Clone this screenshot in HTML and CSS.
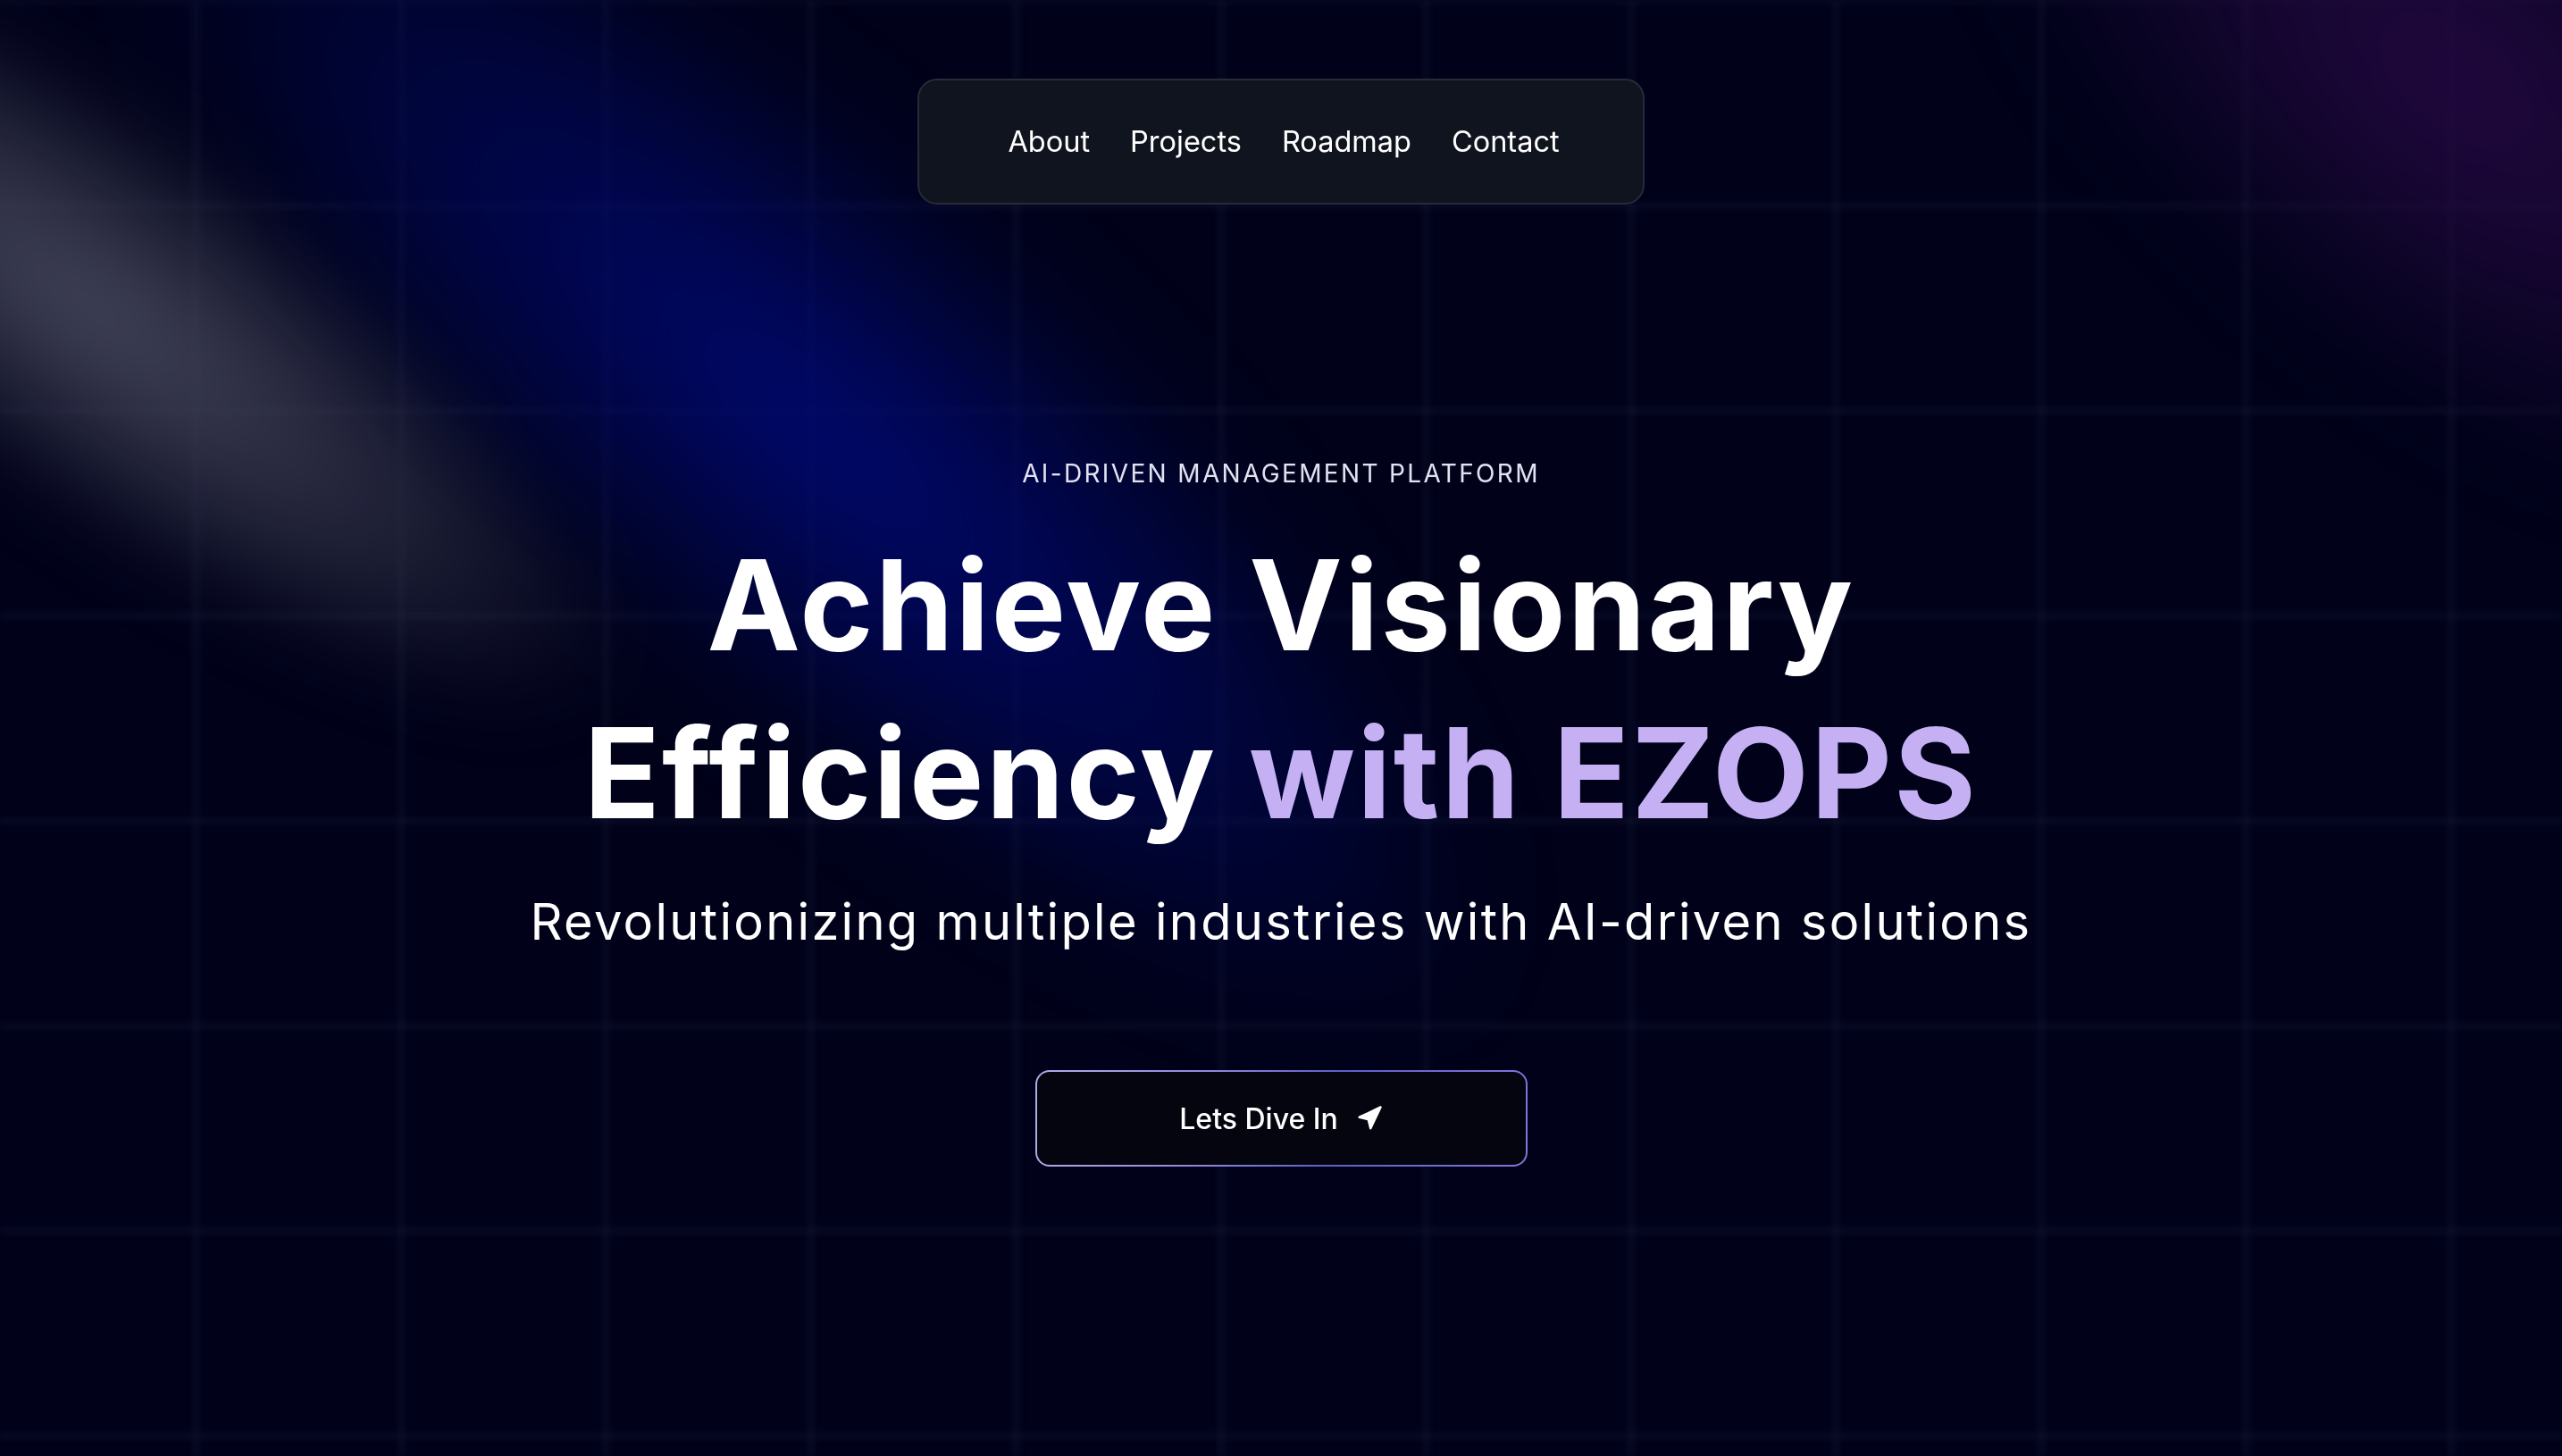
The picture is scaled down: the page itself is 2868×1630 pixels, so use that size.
FILE: index.html
```html
<!DOCTYPE html>
<html lang="en">
<head>
<meta charset="utf-8">
<title>EZOPS</title>
<link rel="stylesheet" href="styles.css">
</head>
<body>
<div class="backdrop" aria-hidden="true">
  <div class="grid"></div>
  <div class="beam beam-gray"></div>
  <div class="beam beam-blue"></div>
  <div class="beam beam-purple"></div>
</div>
<div class="page">
  <nav class="nav">
    <a class="nav-link" href="#about">About</a>
    <a class="nav-link" href="#projects">Projects</a>
    <a class="nav-link" href="#roadmap">Roadmap</a>
    <a class="nav-link" href="#contact">Contact</a>
  </nav>
  <section class="hero">
    <p class="eyebrow">AI-DRIVEN MANAGEMENT PLATFORM</p>
    <h1 class="headline">Achieve Visionary<br>Efficiency <span class="accent">with EZOPS</span></h1>
    <p class="subtitle">Revolutionizing multiple industries with AI-driven solutions</p>
    <a class="cta" href="#start">
      <span>Lets Dive In</span>
      <svg class="cta-icon" viewBox="0 0 24 24" width="30" height="30"><polygon points="3 11 22 2 13 21 11 13 3 11" fill="#ffffff" stroke="#ffffff" stroke-width="2" stroke-linejoin="round"/></svg>
    </a>
  </section>
</div>
</body>
</html>
```
FILE: styles.css
```css
* { box-sizing: border-box; }
html, body { margin: 0; padding: 0; }
body {
  background: #01021a;
  font-family: "Inter", "Noto Sans", sans-serif;
  color: #fff;
  min-height: 1630px;
  overflow: hidden;
}
.backdrop {
  position: fixed;
  inset: 0;
  overflow: hidden;
  z-index: 0;
}
.grid {
  position: absolute;
  inset: 0;
  background-image:
    linear-gradient(to right, rgba(34, 38, 72, 0.25) 0 6px, transparent 6px),
    linear-gradient(to bottom, rgba(34, 38, 72, 0.25) 0 6px, transparent 6px);
  background-size: 229.5px 229.5px;
  background-position: -13px -2px;
  filter: blur(3px);
}
.beam {
  position: absolute;
  border-radius: 50%;
}
.beam-gray {
  left: -620px;
  top: 130px;
  width: 1450px;
  height: 430px;
  transform: rotate(36deg);
  background: radial-gradient(ellipse at center, rgba(74, 76, 96, 0.9) 0%, rgba(62, 64, 84, 0.55) 38%, rgba(40, 42, 60, 0) 70%);
  filter: blur(40px);
}
.beam-blue {
  left: -60px;
  top: 180px;
  width: 1950px;
  height: 600px;
  transform: rotate(41deg);
  background: radial-gradient(ellipse at center, rgba(0, 10, 125, 0.85) 0%, rgba(0, 8, 100, 0.55) 38%, rgba(0, 6, 80, 0) 70%);
  filter: blur(55px);
}
.beam-purple {
  left: 2100px;
  top: -230px;
  width: 1300px;
  height: 640px;
  transform: rotate(40deg);
  background: radial-gradient(ellipse at center, rgba(40, 10, 70, 0.85) 0%, rgba(32, 8, 60, 0.5) 40%, rgba(30, 6, 50, 0) 70%);
  filter: blur(50px);
}
.page {
  position: relative;
  z-index: 1;
  display: flex;
  flex-direction: column;
  align-items: center;
  padding-top: 88px;
}
.nav {
  display: flex;
  align-items: center;
  gap: 45px;
  height: 141px;
  padding: 0 93px 0 99px;
  background: #10141e;
  border: 2px solid #272b38;
  border-radius: 22px;
}
.nav-link {
  color: #fff;
  text-decoration: none;
  font-size: 32.5px;
  font-weight: 400;
}
.hero {
  display: flex;
  flex-direction: column;
  align-items: center;
  text-align: center;
  padding-top: 284px;
}
.eyebrow {
  margin: 0;
  font-size: 28px;
  line-height: 34px;
  letter-spacing: 2.35px;
  color: #e2e2f2;
  font-weight: 400;
}
.headline {
  margin: 36px 0 0;
  font-size: 140px;
  line-height: 188px;
  font-weight: 700;
  letter-spacing: 2.4px;
  color: #fff;
}
.accent { color: #c4b0f3; }
.subtitle {
  margin: 37px 0 0;
  font-size: 56px;
  line-height: 73px;
  letter-spacing: 2.3px;
  font-weight: 400;
  color: #fff;
}
.cta {
  margin-top: 129px;
  width: 551px;
  height: 108px;
  display: flex;
  align-items: center;
  justify-content: center;
  gap: 20px;
  color: #fff;
  text-decoration: none;
  font-size: 32px;
  font-weight: 500;
  border: 2px solid transparent;
  border-radius: 16px;
  background:
    linear-gradient(#04050f, #04050f) padding-box,
    linear-gradient(100deg, #b4aaea 0%, #8f86dc 35%, #5f5fc6 60%, #8175dc 100%) border-box;
}
.cta-icon { display: block; }
```
